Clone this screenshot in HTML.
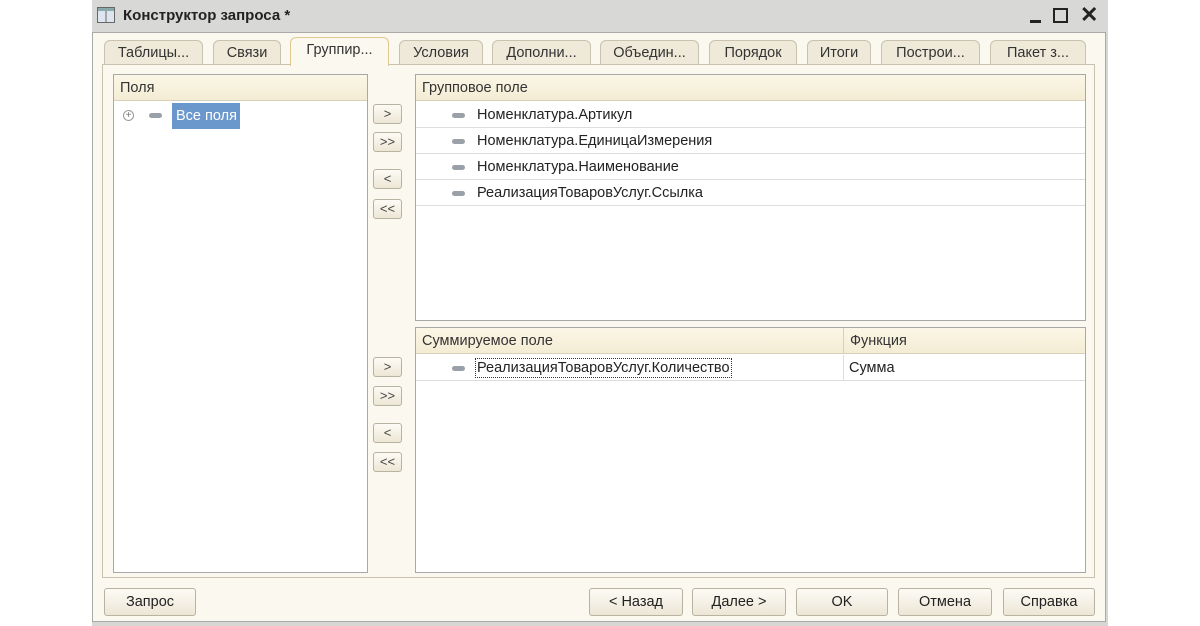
<!DOCTYPE html>
<html><head><meta charset="utf-8"><style>
*{box-sizing:border-box;margin:0;padding:0}
body{width:1200px;height:626px;background:#fff;font-family:"Liberation Sans",sans-serif;font-size:14.5px;color:#222;position:relative;overflow:hidden}
.win{position:absolute;left:92px;top:0;width:1016px;height:626px;background:#d6d6d4}
.title{position:absolute;left:0;top:0;width:1016px;height:32px;background:#d8d8d6}
.title .t{position:absolute;left:31px;top:7px;font-weight:bold;font-size:15px;color:#222}
.body{position:absolute;left:0;top:32px;width:1014px;height:590px;background:#fbf8ef;border:1px solid #aaa}
.a{position:absolute}
.tab{position:absolute;top:40px;height:25px;background:#efe9d9;border:1px solid #c8c2ae;border-bottom:none;border-radius:6px 6px 0 0;text-align:center;line-height:24px;font-size:14.5px;color:#333}
.tab.on{background:#fbf8ef;top:37px;height:29px;border-color:#e0c890;z-index:2}
.pane{position:absolute;left:102px;top:64px;width:993px;height:514px;border:1px solid #c8c2ae}
.box{position:absolute;background:#fff;border:1px solid #a8a8a8}
.hdr{position:absolute;left:0;top:0;right:0;height:26px;background:linear-gradient(#fbf6e6,#f4ecd4);border-bottom:1px solid #d8d0b8;line-height:26px;padding-left:6px;color:#333}
.row{position:absolute;left:0;right:0;height:26px;border-bottom:1px solid #ddd;line-height:26px;color:#222}
.dash{position:absolute;width:13px;height:5px;border-radius:3px;background:#9aa0a8;top:11px}
.sb{position:absolute;left:373px;width:29px;height:20px;background:linear-gradient(#fdfbf5,#ece6d4);border:1px solid #b8b2a0;border-radius:3px;text-align:center;line-height:18px;font-size:13px;color:#444}
.btn{position:absolute;top:588px;height:28px;background:linear-gradient(#fdfbf5,#ece6d6);border:1px solid #b8b2a0;border-radius:3px;text-align:center;line-height:26px;font-size:14.5px;color:#222}
</style></head><body>
<div class="win">
<div class="title">
<svg class="a" style="left:5px;top:7px" width="18" height="16"><rect x="0.5" y="0.5" width="17" height="15" fill="#dde6ef" stroke="#666"/><line x1="9" y1="1" x2="9" y2="15" stroke="#666"/><rect x="1" y="1" width="16" height="3" fill="#8aa"/></svg>
<div class="t">Конструктор запроса *</div>
<div class="a" style="left:938px;top:20px;width:11px;height:3px;background:#222"></div>
<div class="a" style="left:961px;top:8px;width:15px;height:15px;border:2px solid #222"></div>
<div class="a" style="left:988px;top:2px;font-size:22px;font-weight:bold;color:#222">✕</div>
</div>
<div class="body"></div>
</div>
<div class="tab" style="left:104px;width:99px">Таблицы...</div>
<div class="tab" style="left:213px;width:68px">Связи</div>
<div class="tab on" style="left:290px;width:99px">Группир...</div>
<div class="tab" style="left:399px;width:84px">Условия</div>
<div class="tab" style="left:492px;width:99px">Дополни...</div>
<div class="tab" style="left:600px;width:99px">Объедин...</div>
<div class="tab" style="left:709px;width:88px">Порядок</div>
<div class="tab" style="left:807px;width:64px">Итоги</div>
<div class="tab" style="left:881px;width:99px">Построи...</div>
<div class="tab" style="left:990px;width:96px">Пакет з...</div>
<div class="pane"></div>
<div class="box" style="left:113px;top:74px;width:255px;height:499px">
<div class="hdr">Поля</div>
<div class="a" style="left:9px;top:35px;width:11px;height:11px;border:1px solid #999;border-radius:50%;font-size:10px;line-height:9px;text-align:center;color:#777">+</div>
<div class="dash" style="left:35px;top:38px"></div>
<div class="a" style="left:58px;top:28px;width:68px;height:26px;background:#6a98cc;color:#fff;line-height:26px;padding-left:4px">Все поля</div>
</div>
<div class="sb" style="top:104px">&gt;</div>
<div class="sb" style="top:132px">&gt;&gt;</div>
<div class="sb" style="top:169px">&lt;</div>
<div class="sb" style="top:199px">&lt;&lt;</div>
<div class="sb" style="top:357px">&gt;</div>
<div class="sb" style="top:386px">&gt;&gt;</div>
<div class="sb" style="top:423px">&lt;</div>
<div class="sb" style="top:452px">&lt;&lt;</div>
<div class="box" style="left:415px;top:74px;width:671px;height:247px">
<div class="hdr">Групповое поле</div>
<div class="row" style="top:27px"><div class="dash" style="left:36px"></div><span style="position:absolute;left:61px">Номенклатура.Артикул</span></div>
<div class="row" style="top:53px"><div class="dash" style="left:36px"></div><span style="position:absolute;left:61px">Номенклатура.ЕдиницаИзмерения</span></div>
<div class="row" style="top:79px"><div class="dash" style="left:36px"></div><span style="position:absolute;left:61px">Номенклатура.Наименование</span></div>
<div class="row" style="top:105px"><div class="dash" style="left:36px"></div><span style="position:absolute;left:61px">РеализацияТоваровУслуг.Ссылка</span></div>
</div>
<div class="box" style="left:415px;top:327px;width:671px;height:246px">
<div class="hdr">Суммируемое поле<div class="a" style="left:427px;top:0;height:26px;border-left:1px solid #d8d0b8;padding-left:6px">Функция</div></div>
<div class="row" style="top:27px"><div class="dash" style="left:36px"></div><span style="position:absolute;left:59px;top:3px;height:20px;line-height:18px;border:1px dotted #333;padding:0 1px">РеализацияТоваровУслуг.Количество</span><span style="position:absolute;left:433px">Сумма</span><div class="a" style="left:427px;top:0;height:26px;border-left:1px solid #ddd"></div></div>
</div>
<div class="btn" style="left:104px;width:92px">Запрос</div>
<div class="btn" style="left:589px;width:94px">&lt; Назад</div>
<div class="btn" style="left:692px;width:94px">Далее &gt;</div>
<div class="btn" style="left:796px;width:92px">OK</div>
<div class="btn" style="left:898px;width:94px">Отмена</div>
<div class="btn" style="left:1003px;width:92px">Справка</div>
</body></html>
